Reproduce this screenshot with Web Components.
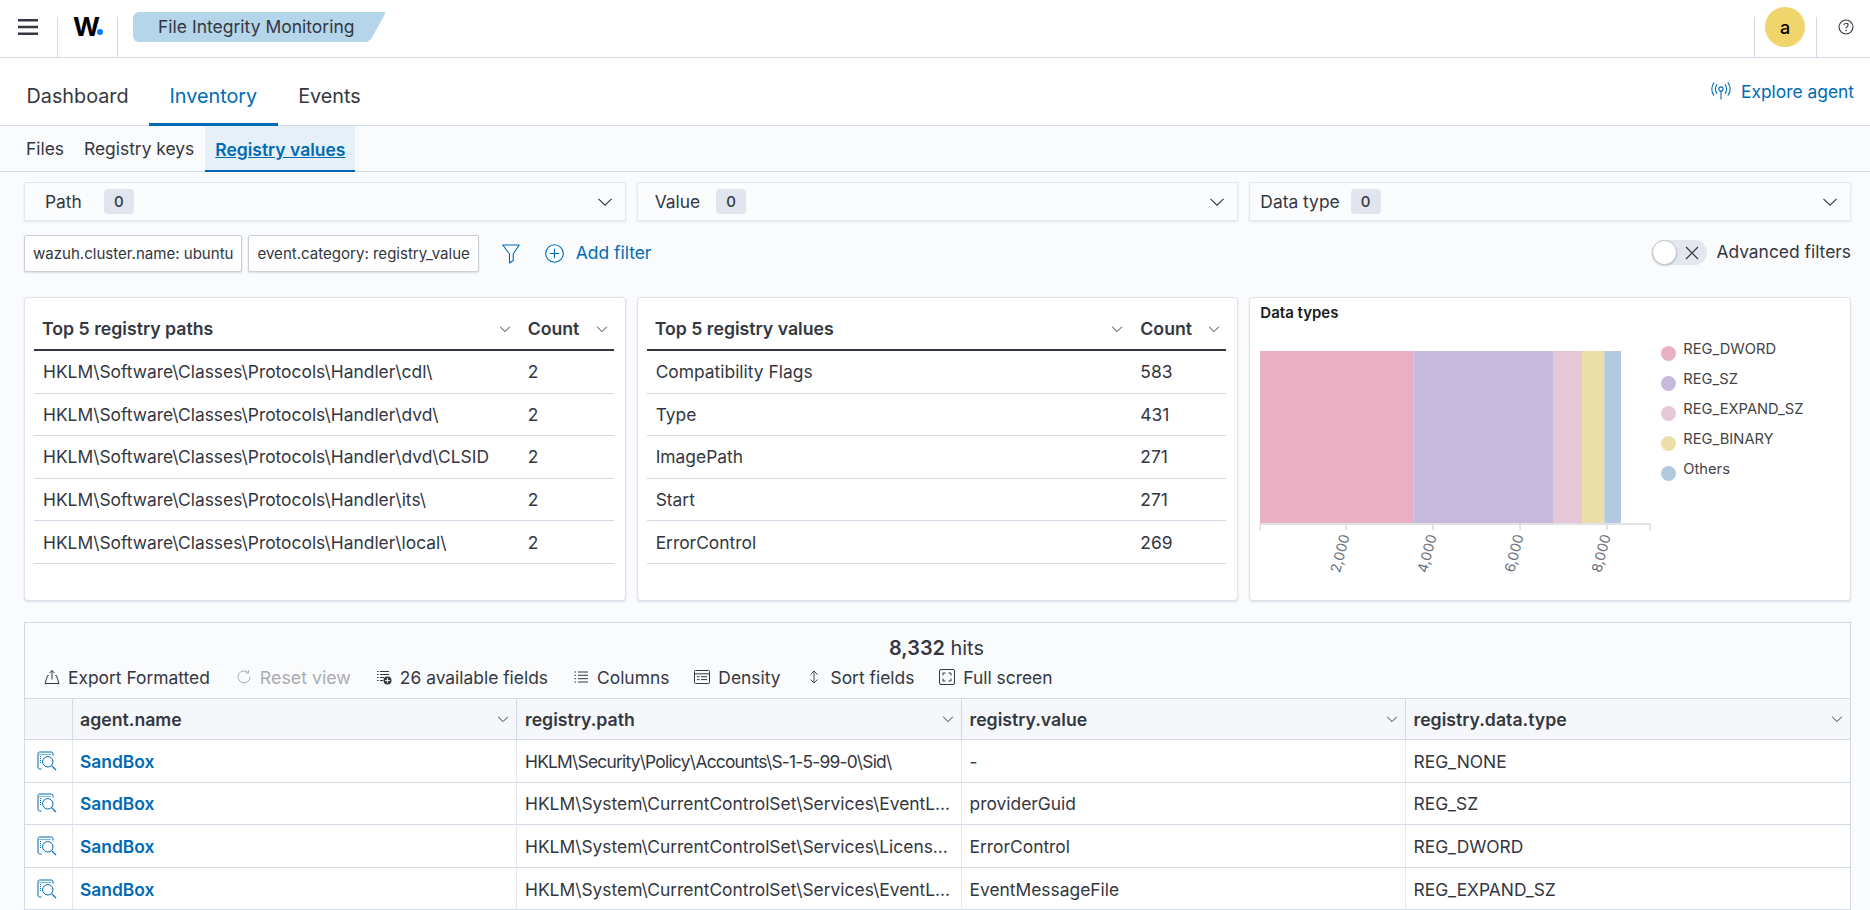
<!DOCTYPE html>
<html lang="en">
<head>
<meta charset="utf-8">
<title>File Integrity Monitoring</title>
<style>
html,body{margin:0;padding:0;height:910px;overflow:hidden;background:#fafbfd;color:#343741;font-family:Inter,"Noto Sans",sans-serif;font-size:17.4px}
</style>
</head>
<body>
<app-header title-text="File Integrity Monitoring" avatar="a"></app-header>
<main-tabs active="Inventory"></main-tabs>
<sub-tabs></sub-tabs>
<app-main>
  <select-row>
    <filter-select label="Path" pad="20" gap="22"></filter-select>
    <filter-select label="Value" pad="17" gap="16"></filter-select>
    <filter-select label="Data type" pad="10" gap="11"></filter-select>
  </select-row>
  <filter-row>
    <filter-pill>wazuh.cluster.name: ubuntu</filter-pill>
    <filter-pill>event.category: registry_value</filter-pill>
  </filter-row>
  <card-row>
    <top-table heading="Top 5 registry paths" rows='[["HKLM\\Software\\Classes\\Protocols\\Handler\\cdl\\",2],["HKLM\\Software\\Classes\\Protocols\\Handler\\dvd\\",2],["HKLM\\Software\\Classes\\Protocols\\Handler\\dvd\\CLSID",2],["HKLM\\Software\\Classes\\Protocols\\Handler\\its\\",2],["HKLM\\Software\\Classes\\Protocols\\Handler\\local\\",2]]'></top-table>
    <top-table heading="Top 5 registry values" rows='[["Compatibility Flags",583],["Type",431],["ImagePath",271],["Start",271],["ErrorControl",269]]'></top-table>
    <types-chart></types-chart>
  </card-row>
  <hits-grid></hits-grid>
</app-main>

<script>
const ICONS = {
  menu:'<svg width="20" height="16" viewBox="0 0 20 16"><path d="M0 1.25h20M0 8h20M0 14.75h20" stroke="#343741" stroke-width="2.4" fill="none"/></svg>',
  help:'<svg width="16" height="16" viewBox="0 0 16 16" fill="none" stroke="#343741" stroke-width="1.1"><circle cx="8" cy="8" r="7"/><path d="M5.9 6.2c.1-1.3 1-2 2.1-2 1.2 0 2.1.8 2.1 1.9 0 1.7-2.1 1.6-2.1 3.3" /><circle cx="8" cy="11.5" r=".8" fill="#343741" stroke="none"/></svg>',
  signal:'<svg width="20" height="18" viewBox="0 0 20 18" fill="none" stroke="#006bb4" stroke-width="1.1" stroke-linecap="round"><circle cx="10" cy="7" r="2.1"/><path d="M10 9.2V17"/><path d="M5.9 2.6C3.9 5 3.9 9 5.9 11.4M14.1 2.6c2 2.4 2 6.4 0 8.8"/><path d="M2.9.8C.1 4.2.1 9.8 2.9 13.2M17.1.8c2.8 3.4 2.8 9 0 12.4"/></svg>',
  chev:'<svg width="16" height="16" viewBox="0 0 16 16" fill="none" stroke="#343741" stroke-width="1.1"><path d="M1.5 4.8 8 11.2l6.5-6.4"/></svg>',
  chevs:'<svg width="12" height="12" viewBox="0 0 12 12" fill="none" stroke="#343741" stroke-width="1"><path d="M1.2 3.8 6 8.6l4.8-4.8"/></svg>',
  filter:'<svg width="18" height="20" viewBox="0 0 18 20" fill="none" stroke="#006bb4" stroke-width="1.1" stroke-linejoin="round"><path d="M.8 1h16.4l-6 9v6.5L7.5 19v-9z"/></svg>',
  plus:'<svg width="19" height="19" viewBox="0 0 19 19" fill="none" stroke="#006bb4" stroke-width="1.1"><circle cx="9.5" cy="9.5" r="8.8"/><path d="M9.5 4.8v9.4M4.8 9.5h9.4"/></svg>',
  cross:'<svg width="14" height="14" viewBox="0 0 14 14" fill="none" stroke="#343741" stroke-width="1.2"><path d="M1 1l12 12M13 1 1 13"/></svg>',
  export:'<svg width="16" height="16" viewBox="0 0 16 16" fill="none" stroke="#343741" stroke-width="1"><path d="M4.8 6.5H3.6L1 14.5h14l-2.6-8h-1.2"/><path d="M8 10.5V1.5M5.3 4.2 8 1.5l2.7 2.7"/></svg>',
  reset:'<svg width="16" height="16" viewBox="0 0 16 16" fill="none" stroke="#a9acb2" stroke-width="1"><path d="M12.2 3.6A6 6 0 1 0 14 8"/><path d="M12.6 1v3h-3"/></svg>',
  fields:'<svg width="16" height="16" viewBox="0 0 16 16"><path d="M1 2.5h1.6M4 2.5h9M1 5.5h1.6M4 5.5h9M1 8.5h1.6M4 8.5h4M1 11.5h1.6M4 11.5h3" stroke="#343741" fill="none"/><circle cx="11.5" cy="11.5" r="4" fill="#343741"/><path d="M11.5 9.2v4.6M9.2 11.5h4.6" stroke="#fff" stroke-width="1.1"/></svg>',
  columns:'<svg width="16" height="16" viewBox="0 0 16 16"><path d="M1.5 3h1.6M5 3h10M1.5 6.3h1.6M5 6.3h10M1.5 9.7h1.6M5 9.7h10M1.5 13h1.6M5 13h10" stroke="#343741" fill="none"/></svg>',
  density:'<svg width="16" height="16" viewBox="0 0 16 16" fill="none" stroke="#343741"><rect x=".5" y="1.5" width="15" height="13" rx="1"/><path d="M.5 4.8h15M3 7.7h2.5M7 7.7h6M3 10.6h2.5M7 10.6h6"/></svg>',
  sort:'<svg width="16" height="16" viewBox="0 0 16 16" fill="none" stroke="#343741"><path d="M3.5 5.5 7 2l3.5 3.5M3.5 10.5 7 14l3.5-3.5M7 2v12" stroke-width=".9"/></svg>',
  full:'<svg width="16" height="16" viewBox="0 0 16 16" fill="none" stroke="#343741"><rect x=".5" y=".5" width="15" height="15" rx="1.5"/><path d="M4 6.5V4h2.5M9.5 4H12v2.5M12 9.5V12H9.5M6.5 12H4V9.5"/></svg>',
  inspect:'<svg width="20" height="20" viewBox="0 0 20 20" fill="none" stroke="#006bb4" stroke-width="1"><path d="M4.5 18H2.8C1.7 18 1 17.3 1 16.2V2.8C1 1.7 1.7 1 2.8 1h11.4c1.1 0 1.8.7 1.8 1.8V4.5"/><path d="M2.5 3.5h12" stroke-dasharray="1 1"/><path d="M3.5 5v8" stroke-dasharray="1 1"/><circle cx="10.8" cy="10.8" r="5.2"/><path d="M14.6 14.6l4.4 4.4" stroke-width="1.2"/></svg>'
};
const def = (name, css, html, init) => customElements.define(name, class extends HTMLElement {
  connectedCallback(){
    if(this.shadowRoot) return;
    const root = this.attachShadow({mode:'open'});
    root.innerHTML = '<style>'+css+'</style>'+(typeof html==='function'?html(this):html);
    if(init) init(this, root);
  }
});

def('app-header',
`:host{display:flex;height:57px;background:#fff;border-bottom:1px solid #d3dae6;box-sizing:content-box;align-items:stretch}
.box{display:flex;align-items:center;justify-content:center;height:40px;align-self:flex-end}
.menu{width:58px;box-sizing:border-box;border-right:1px solid #d3dae6;position:relative}
.menu svg{position:absolute;left:18px;top:2px}
.logo{width:60px;border-right:1px solid #d3dae6;position:relative;box-sizing:border-box}
.w{position:absolute;left:15px;top:-4px;font:700 26px/27px Inter,sans-serif;color:#000;letter-spacing:-1px}
.dot{position:absolute;left:39px;top:12px;width:6.4px;height:6.4px;border-radius:50%;background:#0a7cff}
.crumb{margin:12px 0 0 15px;width:252px;height:30px;box-sizing:border-box;padding:0 0 0 25px;background:#b5d5ea;font-size:17.5px;line-height:30px;color:#343741;clip-path:polygon(3px 0,100% 0,100% 2px,94.5% 27px,93% 30px,3px 30px,0 27px,0 3px);border-radius:6px 0 0 6px}
.sp{flex:1}
.av{width:62px;border-left:1px solid #d3dae6;position:relative;box-sizing:border-box}
.circle{position:absolute;left:10px;top:-10px;width:40px;height:40px;border-radius:50%;background:#efd56b;display:flex;align-items:center;justify-content:center;font-weight:500;font-size:18px;color:#000}
.help{width:54px;border-left:1px solid #d3dae6;position:relative;box-sizing:border-box}
.help svg{position:absolute;left:21px;top:2px}`,
el=>`<div class="box menu">${ICONS.menu}</div><div class="box logo"><span class="w">W</span><span class="dot"></span></div>
<div class="crumb">${el.getAttribute('title-text')}</div><div class="sp"></div>
<div class="box av"><div class="circle">${el.getAttribute('avatar')}</div></div><div class="box help">${ICONS.help}</div>`);

def('main-tabs',
`:host{display:flex;height:67px;background:#fff;border-bottom:1px solid #d3dae6;padding-left:6px;box-sizing:content-box}
.t{padding:7px 20.5px 0;font-size:19.8px;line-height:24px;display:flex;align-items:center;height:67px;box-sizing:border-box;color:#343741;position:relative;top:1px}
.on{color:#006bb4;box-shadow:inset 0 -3px 0 #006bb4}
.sp{flex:1}
.x{display:flex;align-items:center;gap:10px;color:#006bb4;font-size:17.4px;padding-right:16px;margin-top:-1px}`,
el=>['Dashboard','Inventory','Events'].map(t=>`<div class="t ${t===el.getAttribute('active')?'on':''}">${t}</div>`).join('')+`<div class="sp"></div><div class="x">${ICONS.signal}<span>Explore agent</span></div>`);

def('sub-tabs',
`:host{display:flex;height:45px;border-bottom:1px solid #d3dae6;padding-left:16px;box-sizing:content-box}
.t{padding:0 10px;font-size:17.4px;display:flex;align-items:center;color:#343741}
.on{background:#e6f0f8;color:#006bb4;font-weight:600;font-size:17.5px;text-decoration:underline;box-shadow:inset 0 -2px 0 #006bb4;height:46px;margin-left:1px}`,
`<div class="t"><span>Files</span></div><div class="t"><span>Registry keys</span></div><div class="t on"><span>Registry values</span></div>`);

def('app-main',`:host{display:block;padding:10px 19px 0 24px}`,`<slot></slot>`);
def('select-row',`:host{display:grid;grid-template-columns:repeat(3,1fr);gap:11px}`,`<slot></slot>`);

def('filter-select',
`:host{display:flex;align-items:center;height:39px;box-sizing:border-box;border:1px solid #e4e8f0;box-shadow:0 1px 2px rgba(152,162,179,.25);background:#fbfcfd;padding-right:12px}
.l{font-size:17.4px}
.b{min-width:30px;height:25px;line-height:25px;text-align:center;background:#e0e5ee;border-radius:4px;font-size:15px;font-weight:500;box-sizing:border-box}
.sp{flex:1}svg{display:block}`,
el=>`<span class="l" style="padding-left:${el.getAttribute('pad')}px">${el.getAttribute('label')}</span><span class="b" style="margin-left:${el.getAttribute('gap')}px">0</span><span class="sp"></span>${ICONS.chev}`);

def('filter-row',
`:host{display:flex;align-items:center;margin-top:14px;height:37px;gap:6px}
.ic{margin-left:17px;display:flex}
.add{display:flex;align-items:center;gap:12px;color:#006bb4;font-size:17.4px;margin-left:19px}
.add span{position:relative;top:-1px}
.sp{flex:1}
.tg{width:55px;height:25px;border-radius:13px;background:#e3e7ee;position:relative;margin-right:3px;top:-1px}
.kn{position:absolute;left:0;top:0;width:25px;height:25px;box-sizing:border-box;border-radius:50%;background:#fff;border:1px solid #c2c7d0;box-shadow:0 1px 2px rgba(0,0,0,.2)}
.tg svg{position:absolute;left:33px;top:6px}
.af{font-size:17.4px;position:relative;top:-2px}`,
`<slot></slot><span class="ic">${ICONS.filter}</span><span class="add">${ICONS.plus}<span>Add filter</span></span><span class="sp"></span><span class="tg"><span class="kn"></span>${ICONS.cross}</span><span class="af">Advanced filters</span>`);

def('filter-pill',
`:host{display:block;height:37px;box-sizing:border-box;line-height:35px;padding:0 8px;border:1px solid #c9ced8;border-radius:2px;background:#fff;box-shadow:0 1px 2px rgba(152,162,179,.35);font-size:15.05px;white-space:nowrap}`,
`<slot></slot>`);

def('card-row',`:host{display:grid;grid-template-columns:repeat(3,1fr);gap:11px;margin-top:25px;height:304px}`,`<slot></slot>`);

const cardCss = `:host{display:block;box-sizing:border-box;background:#fff;border:1px solid #dfe4ec;border-radius:4px;box-shadow:0 1px 2px rgba(152,162,179,.35);height:304px}`;

def('top-table',
cardCss+`:host{padding:10px 11px 0 9px}
.g{display:grid;grid-template-columns:1fr 94px}
.h{height:41px;border-bottom:2px solid #343741;display:flex;align-items:center;font-weight:600;font-size:17.7px;box-sizing:content-box}
.h span{flex:1;padding-left:8px}
.h1 svg{margin-right:9px}.h2 svg{margin-right:6px}
.c{height:42.6px;box-sizing:border-box;border-bottom:1px solid #d3dae6;display:flex;align-items:center;font-size:17.4px;white-space:nowrap;padding-left:8px}
.a{padding-left:9px}`,
el=>{
  const rows = JSON.parse(el.getAttribute('rows'));
  return `<div class="g"><div class="h h1"><span>${el.getAttribute('heading')}</span>${ICONS.chevs}</div><div class="h h2"><span>Count</span>${ICONS.chevs}</div>`+
    rows.map(r=>`<div class="c a">${r[0]}</div><div class="c">${r[1]}</div>`).join('')+`</div>`;
});

def('types-chart',
cardCss+`:host{position:relative}
.t{position:absolute;left:10px;top:6px;font-size:15px;font-weight:600;color:#1a1c21;line-height:18px}
svg{position:absolute;left:0;top:0}
.lg{position:absolute;left:411px;top:37px;display:flex;flex-direction:column;font-size:14.7px;color:#444}
.i{height:30px;display:flex;align-items:flex-start;gap:7px;line-height:30px}
.i b{display:block;width:15px;height:15px;border-radius:50%;margin-top:11px;flex:none}
.i span{position:relative;top:-1px}`,
`<div class="t">Data types</div>
<svg width="600" height="302">
<g transform="translate(-1250,-298)">
<rect x="1260" y="351" width="153.6" height="172" fill="#e9b0c3"/>
<rect x="1413.6" y="351" width="139.4" height="172" fill="#c7b9dc"/>
<rect x="1553" y="351" width="29" height="172" fill="#e6c7d8"/>
<rect x="1582" y="351" width="22.4" height="172" fill="#ebdfa9"/>
<rect x="1604.4" y="351" width="16.6" height="172" fill="#b2c9e0"/>
<path d="M1260 524h390M1260 524v6M1346 524v6M1433 524v6M1520 524v6M1607 524v6M1650 524v6" stroke="#d9d9d9" stroke-width="1.4" fill="none"/>
<g font-family="Inter,sans-serif" font-size="14" fill="#69707d" text-anchor="end">
<text transform="translate(1346,535) rotate(-75)" dy="4">2,000</text>
<text transform="translate(1433,535) rotate(-75)" dy="4">4,000</text>
<text transform="translate(1520,535) rotate(-75)" dy="4">6,000</text>
<text transform="translate(1607,535) rotate(-75)" dy="4">8,000</text>
</g></g></svg>
<div class="lg">
<div class="i"><b style="background:#e9b0c3"></b><span>REG_DWORD</span></div>
<div class="i"><b style="background:#c7b9dc"></b><span>REG_SZ</span></div>
<div class="i"><b style="background:#e6c7d8"></b><span>REG_EXPAND_SZ</span></div>
<div class="i"><b style="background:#ebdfa9"></b><span>REG_BINARY</span></div>
<div class="i"><b style="background:#b2c9e0"></b><span>Others</span></div>
</div>`);

def('hits-grid',
`:host{display:block;margin-top:21px;border:1px solid #d3dae6;border-bottom:0;box-sizing:border-box;height:300px;background:#fafbfd}
.hits{text-align:center;font-size:19.9px;height:40px;line-height:50px;padding-right:2px}
.hits b{font-weight:600}
.bar{display:flex;height:35px;align-items:center;padding:0 0 7px 19px;box-sizing:border-box;font-size:17.4px}
.btn{display:flex;align-items:center;gap:8px;margin-right:26px;white-space:nowrap}
.tight{margin-right:25px}
.btn svg{display:block}
.dis{color:#a9acb2;font-size:17.8px;margin-right:25px}
.row{display:grid;grid-template-columns:48px 444px 444.5px 444px 1fr;background:#fff}
.cell{border-bottom:1px solid #d3dae6;border-right:1px solid #e4e8f0;box-sizing:border-box;display:flex;align-items:center;padding:1px 7px 0 8px;height:42.6px;white-space:nowrap;font-size:17.4px}
.cell:nth-child(2){padding-left:7px}
.cell:last-child{border-right:0}
.cell span{flex:1}
.head .cell{background:#f5f7fa;font-weight:600;height:42px;font-size:17.7px;border-right-color:#d3dae6;border-top:1px solid #d3dae6;padding-top:0}
.ic{padding:0 0 0 12px}
.ic svg{display:block}
.tl{letter-spacing:-.78px}
a{color:#006bb4;font-weight:600;text-decoration:none}`,
()=>{
 const data=[["HKLM\\Security\\Policy\\Accounts\\S-1-5-99-0\\Sid\\","-","REG_NONE","tl"],
 ["HKLM\\System\\CurrentControlSet\\Services\\EventL...","providerGuid","REG_SZ",""],
 ["HKLM\\System\\CurrentControlSet\\Services\\Licens...","ErrorControl","REG_DWORD",""],
 ["HKLM\\System\\CurrentControlSet\\Services\\EventL...","EventMessageFile","REG_EXPAND_SZ",""]];
 const btn=(i,t,c='')=>`<span class="btn ${c}">${ICONS[i]}<span>${t}</span></span>`;
 return `<div class="hits"><b>8,332</b> hits</div>
 <div class="bar">${btn('export','Export Formatted')}${btn('reset','Reset view','dis')}${btn('fields','26 available fields','tight')}${btn('columns','Columns','tight')}${btn('density','Density')}${btn('sort','Sort fields','tight')}${btn('full','Full screen')}</div>
 <div class="row head"><div class="cell"></div>${['agent.name','registry.path','registry.value','registry.data.type'].map(h=>`<div class="cell"><span>${h}</span>${ICONS.chevs}</div>`).join('')}</div>`+
 data.map(d=>`<div class="row"><div class="cell ic">${ICONS.inspect}</div><div class="cell"><a>SandBox</a></div><div class="cell"><span class="${d[3]}">${d[0]}</span></div><div class="cell"><span>${d[1]}</span></div><div class="cell"><span>${d[2]}</span></div></div>`).join('');
});
</script>
</body>
</html>
